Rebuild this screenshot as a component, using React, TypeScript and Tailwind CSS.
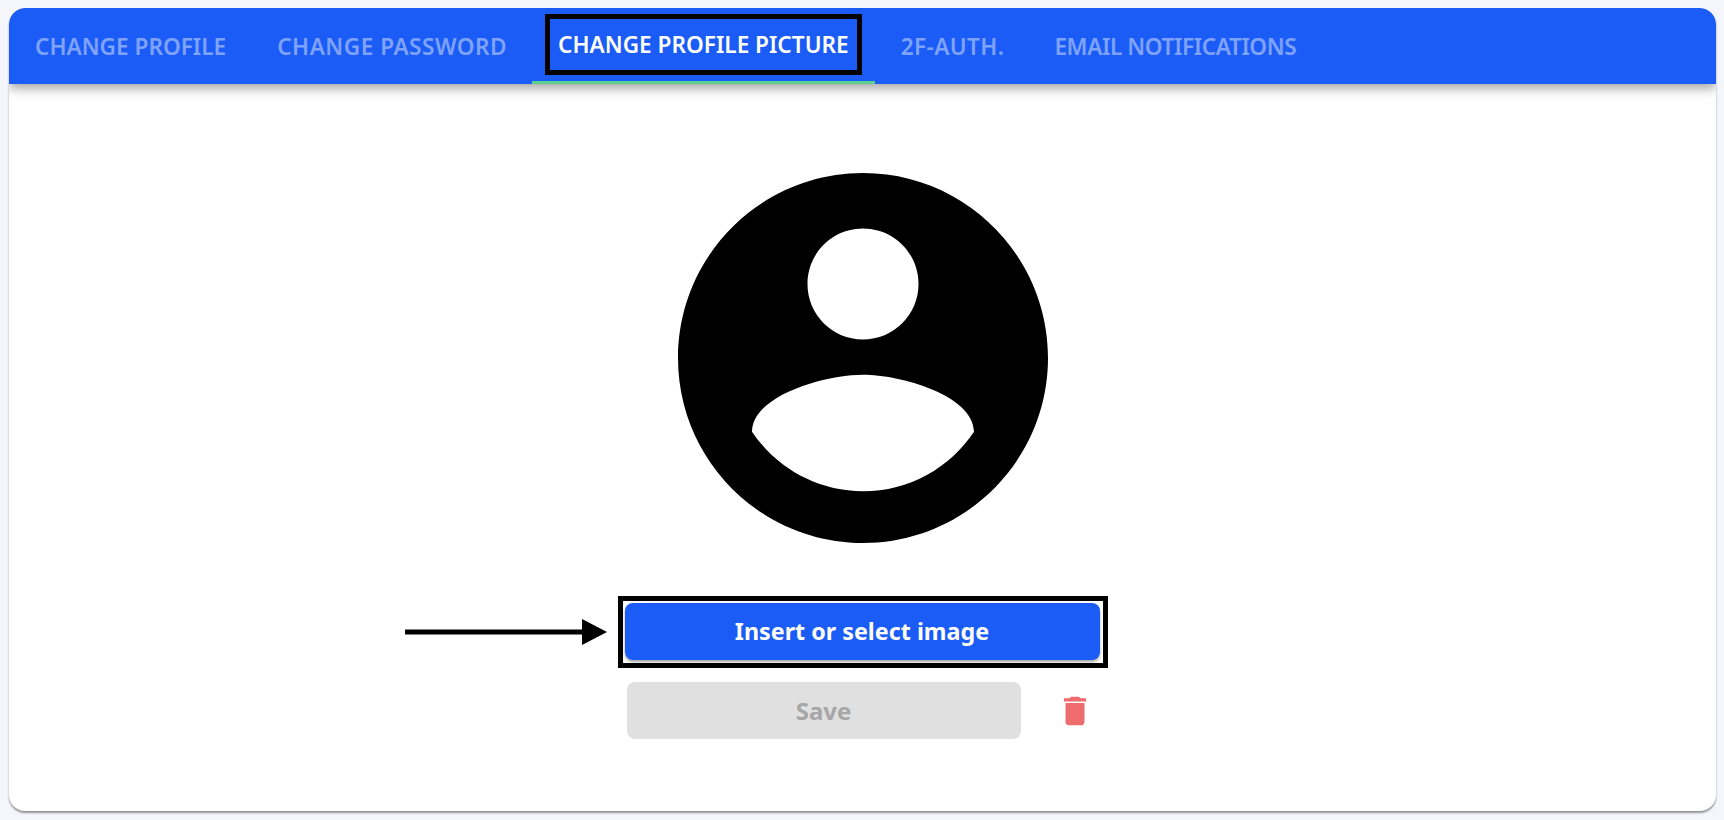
const tabs = [
  { label: "CHANGE PROFILE", extra: "pl-[26px] pr-[25px]" },
  { label: "CHANGE PASSWORD", extra: "pl-[26px] pr-[25px] tracking-[0.5px]" },
  { label: "2F-AUTH.", extra: "pl-[26px] pr-[24px] tracking-[0.4px]" },
  { label: "EMAIL NOTIFICATIONS", extra: "px-[26px] tracking-[-0.4px]" },
];

function Tab({ label, extra }: { label: string; extra: string }) {
  return <div className={`flex items-center whitespace-nowrap pt-[1px] text-[#7fa3fb] ${extra}`}>{label}</div>;
}

function Tabs() {
  return (
    <nav className="relative z-10 flex h-[76px] shrink-0 items-stretch rounded-t-2xl bg-[#1b5cf7] shadow-[0_4px_12px_rgba(0,0,0,0.38)]">
      <Tab {...tabs[0]} />
      <Tab {...tabs[1]} />
      <div className="flex h-full items-start border-b-[3px] border-[#5ad18f] px-[13px] pt-[6px]">
        {/* annotation frame */}
        <span className="flex h-[61px] items-center whitespace-nowrap border-[5px] border-black px-2 pt-[1px] text-white">
          CHANGE PROFILE PICTURE
        </span>
      </div>
      <Tab {...tabs[2]} />
      <Tab {...tabs[3]} />
    </nav>
  );
}

function Avatar() {
  return (
    <svg viewBox="0 0 24 24" className="h-[444px] w-[444px] shrink-0" fill="#000">
      <path d="M12 2C6.48 2 2 6.48 2 12s4.48 10 10 10 10-4.48 10-10S17.52 2 12 2zm0 3c1.66 0 3 1.34 3 3s-1.34 3-3 3-3-1.34-3-3 1.34-3 3-3zm0 14.2c-2.5 0-4.71-1.28-6-3.22.03-1.99 4-3.08 6-3.08 1.99 0 5.97 1.09 6 3.08-1.29 1.94-3.5 3.22-6 3.22z" />
    </svg>
  );
}

export default function App() {
  return (
    <div className="h-[820px] w-[1724px] bg-[#f5f5fc] pb-2 pl-[9px] pr-2 pt-2 font-['Noto_Sans',sans-serif] text-[22.6px] font-semibold">
      <div className="flex h-[803px] flex-col overflow-hidden rounded-2xl bg-white shadow-[0_2px_2px_rgba(0,0,0,0.4)]">
        <Tabs />
        <main className="flex flex-col items-center pt-[52px]">
          <Avatar />
          <div className="relative mt-4 w-[490px]">
            {/* arrow pointing at the button */}
            <svg viewBox="0 0 202 26" className="absolute left-[-213px] top-[23px] h-[26px] w-[202px]" fill="#000">
              <rect x="0" y="10.5" width="180" height="5" />
              <polygon points="177,0 202,13 177,26" />
            </svg>
            <div className="h-[72px] border-[5px] border-black py-[2px] pl-[2px] pr-[3px]">
              <button className="h-[57px] w-full rounded-lg bg-[#1b5cf7] text-[23.3px] font-bold text-white shadow-[0_2px_3px_rgba(0,0,0,0.35)]">
                Insert or select image
              </button>
            </div>
            <div className="mt-[14px] flex items-center pl-[9px]">
              <button className="h-[57px] w-[394px] rounded-lg bg-[#e0e0e0] text-[24px] font-bold text-[#a6a6a6]">Save</button>
              <svg viewBox="0 0 24 24" className="ml-[35px] h-[38px] w-[38px]" fill="#ee6b6e">
                <path d="M6 19c0 1.1.9 2 2 2h8c1.1 0 2-.9 2-2V7H6v12zM19 4h-3.5l-1-1h-5l-1 1H5v2h14V4z" />
              </svg>
            </div>
          </div>
        </main>
      </div>
    </div>
  );
}
